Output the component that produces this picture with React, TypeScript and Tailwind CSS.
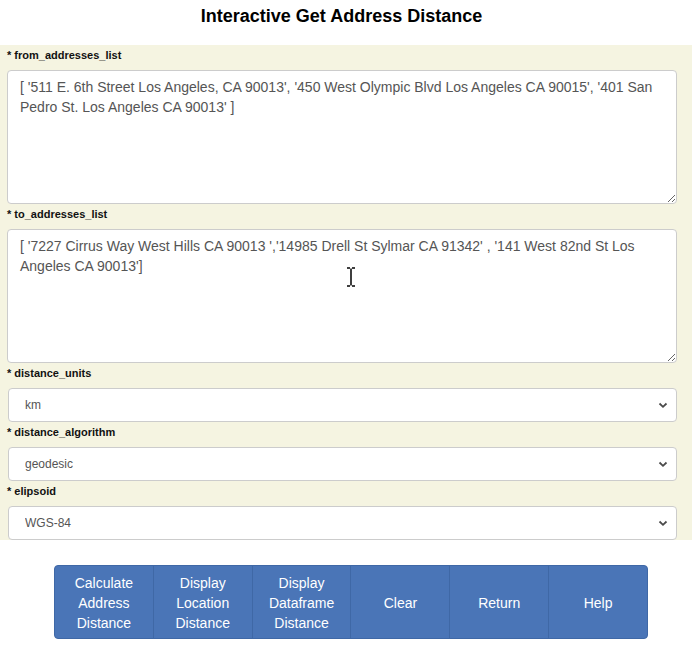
import React from "react";

const fromText =
  "[ '511 E. 6th Street Los Angeles, CA 90013', '450 West Olympic Blvd Los Angeles CA 90015', '401 San Pedro St. Los Angeles CA 90013' ]";
const toText =
  "[ '7227 Cirrus Way West Hills CA 90013 ','14985 Drell St Sylmar CA 91342' , '141 West 82nd St Los Angeles CA 90013']";

function Label({ text }: { text: string }) {
  return (
    <div className="pt-[3px] pb-[7px] pl-[7px] text-[11px] leading-[15px] font-bold text-[#111]">
      * {text}
    </div>
  );
}

function Chevron() {
  return (
    <svg width="10" height="7" viewBox="0 0 10 7" className="absolute right-[9px] top-[14px]">
      <path d="M1.5 1.5 L5 4.8 L8.5 1.5" stroke="#4a4a4a" strokeWidth="1.8" fill="none" />
    </svg>
  );
}

function SelectField({ label, value }: { label: string; value: string }) {
  return (
    <>
      <Label text={label} />
      <div className="relative ml-[8px] w-[669px] h-[34px]">
        <select
          defaultValue={value}
          className="w-full h-full appearance-none bg-white border border-[#ccc] rounded-[4px] pl-[16px] text-[12px] text-[#555] outline-none"
        >
          <option>{value}</option>
        </select>
        <Chevron />
      </div>
    </>
  );
}

function AreaField({ label, value }: { label: string; value: string }) {
  return (
    <>
      <Label text={label} />
      <textarea
        defaultValue={value}
        className="block ml-[7px] w-[670px] h-[134px] bg-white border border-[#ccc] rounded-[4px] px-3 pt-[6px] pb-[8px] text-[14px] leading-[20px] text-[#555] outline-none"
      />
    </>
  );
}

const buttons = [
  ["Calculate", "Address", "Distance"],
  ["Display", "Location", "Distance"],
  ["Display", "Dataframe", "Distance"],
  ["Clear"],
  ["Return"],
  ["Help"],
];

export default function App() {
  return (
    <div className="relative w-[697px] h-[647px] bg-white font-['Liberation_Sans',Arial,sans-serif]">
      <div className="w-[683px] h-[45px] pt-[6px] text-center text-[18px] leading-[20px] font-bold text-black">
        Interactive Get Address Distance
      </div>

      <div className="w-[692px] bg-[#f5f4e1]">
        <AreaField label="from_addresses_list" value={fromText} />
        <AreaField label="to_addresses_list" value={toText} />
        <SelectField label="distance_units" value="km" />
        <SelectField label="distance_algorithm" value="geodesic" />
        <SelectField label="elipsoid" value="WGS-84" />
      </div>

      <div className="mt-[25px] ml-[54px] flex w-[594px] h-[74px] rounded-[4px] overflow-hidden border border-[#3f68a6] bg-[#4a75b7]">
        {buttons.map((lines, i) => (
          <div
            key={i}
            className={`flex-1 flex flex-col items-center justify-center pt-[2px] text-white text-[14px] leading-[20px] ${
              i > 0 ? "border-l border-[#3f68a6]" : ""
            }`}
          >
            {lines.map((l, j) => (
              <span key={j}>{l}</span>
            ))}
          </div>
        ))}
      </div>

      <svg width="10" height="20" viewBox="0 0 10 20" className="absolute left-[346px] top-[267px]">
        <path d="M1 1 H4 M6 1 H9 M5 1.5 V18.5 M1 19 H4 M6 19 H9" stroke="#000" strokeWidth="1.5" fill="none" />
      </svg>
    </div>
  );
}
